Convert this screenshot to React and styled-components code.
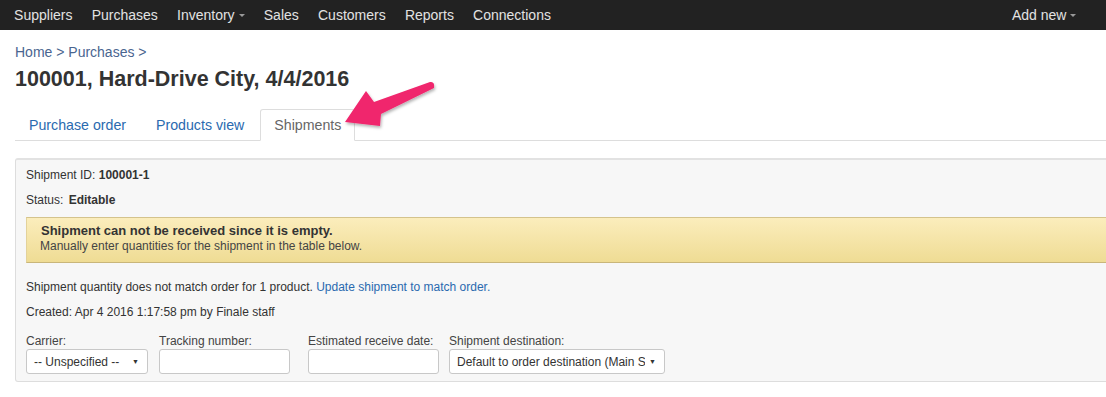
import React from "react";
import styled, { createGlobalStyle } from "styled-components";

const Global = createGlobalStyle`
  html, body { margin: 0; padding: 0; background: #fff; overflow: hidden; }
  body { font-family: "Liberation Sans", Arial, sans-serif; color: #333; }
  * { box-sizing: border-box; }
`;

const NavBar = styled.div`
  height: 30px;
  background: #222;
  display: flex;
  align-items: center;
  justify-content: space-between;
  padding: 0 20px 0 4.5px;
`;

const NavGroup = styled.div`
  display: flex;
  align-items: center;
`;

const NavItem = styled.span`
  color: #e2e2e2;
  font-size: 14px;
  padding: 0 9.6px;
  display: inline-flex;
  align-items: center;
`;

const Caret = styled.span`
  display: inline-block;
  margin-left: 4px;
  width: 0;
  height: 0;
  border-left: 3px solid transparent;
  border-right: 3px solid transparent;
  border-top: 3px solid #999;
`;

const Page = styled.div`
  position: relative;
  padding: 14px 0 0 15px;
`;

const Breadcrumb = styled.div`
  font-size: 14px;
  color: #4a6590;
  line-height: 16px;
`;

const Title = styled.h1`
  margin: 7px 0 0;
  font-size: 21.5px;
  font-weight: bold;
  color: #333;
  line-height: 24px;
`;

const Tabs = styled.div`
  display: flex;
  margin-top: 18px;
  border-bottom: 1px solid #ddd;
  height: 32px;
`;

const Tab = styled.div`
  padding: 0 13px;
  margin-right: 2px;
  font-size: 14.2px;
  height: ${(p) => (p.$active ? "32px" : "31px")};
  display: flex;
  align-items: center;
  color: ${(p) => (p.$active ? "#666" : "#2a6aaf")};
  background: #fff;
  border: 1px solid ${(p) => (p.$active ? "#ddd" : "transparent")};
  border-bottom-color: transparent;
  border-radius: 3px 3px 0 0;
`;

const Panel = styled.div`
  margin-top: 17px;
  margin-right: -20px;
  background: #f7f7f7;
  border: 1px solid #ddd;
  border-top: 2px solid #e2e2e2;
  border-radius: 3px;
  padding: 7px 0 7px 10px;
  font-size: 12px;
  color: #333;
`;

const Line = styled.div`
  line-height: 16px;
  margin-bottom: ${(p) => p.$mb ?? 9}px;
`;

const Strong = styled.b`
  font-weight: bold;
  margin-left: ${(p) => p.$ml || 0}px;
`;

const Alert = styled.div`
  background: linear-gradient(#fbedbc, #efdc94);
  border-top: 1px solid #d4c38c;
  border-bottom: 1px solid #c9b67a;
  border-left: 1px solid #e3d29a;
  padding: 5px 0 9px 14px;
  margin-bottom: 16px;
`;

const AlertTitle = styled.div`
  font-size: 13px;
  font-weight: bold;
  color: #333;
  line-height: 16px;
`;

const AlertText = styled.div`
  font-size: 12px;
  color: #444;
  line-height: 14px;
  margin-left: -1px;
`;

const Link = styled.span`
  color: #2a6aaf;
`;

const FieldRow = styled.div`
  display: flex;
  align-items: flex-end;
  margin-top: 14px;
`;

const Field = styled.div`
  display: flex;
  flex-direction: column;
  margin-right: ${(p) => p.$mr}px;
`;

const Label = styled.label`
  font-size: 12px;
  color: #444;
  line-height: 14px;
  margin-bottom: 1px;
`;

const Input = styled.div`
  width: ${(p) => p.$w}px;
  height: 25px;
  background: #fff;
  border: 1px solid #c8c8c8;
  border-radius: 3px;
`;

const Select = styled.div`
  width: ${(p) => p.$w}px;
  height: 25px;
  background: #fff;
  border: 1px solid #c8c8c8;
  border-radius: 3px;
  display: flex;
  align-items: center;
  padding: 0 8px 0 7px;
  font-size: 12px;
  color: #333;
  white-space: nowrap;
`;

const SelText = styled.span`
  flex: 1;
  min-width: 0;
  overflow: hidden;
  white-space: nowrap;
`;

const SelCaret = styled.span`
  flex: none;
  font-size: 7px;
  color: #333;
  margin-left: 4px;
`;

const Arrow = styled.svg`
  position: absolute;
  left: 330px;
  top: 47px;
  overflow: visible;
`;

export default function App() {
  return (
    <>
      <Global />
      <NavBar>
        <NavGroup>
          <NavItem>Suppliers</NavItem>
          <NavItem>Purchases</NavItem>
          <NavItem>
            Inventory<Caret />
          </NavItem>
          <NavItem>Sales</NavItem>
          <NavItem>Customers</NavItem>
          <NavItem>Reports</NavItem>
          <NavItem>Connections</NavItem>
        </NavGroup>
        <NavGroup>
          <NavItem>
            Add new<Caret />
          </NavItem>
        </NavGroup>
      </NavBar>
      <Page>
        <Breadcrumb>Home &gt; Purchases &gt;</Breadcrumb>
        <Title>100001, Hard-Drive City, 4/4/2016</Title>
        <Tabs>
          <Tab>Purchase order</Tab>
          <Tab>Products view</Tab>
          <Tab $active>Shipments</Tab>
        </Tabs>
        <Panel>
          <Line>
            Shipment ID: <Strong>100001-1</Strong>
          </Line>
          <Line $mb={9}>
            Status: <Strong $ml={2}>Editable</Strong>
          </Line>
          <Alert>
            <AlertTitle>Shipment can not be received since it is empty.</AlertTitle>
            <AlertText>Manually enter quantities for the shipment in the table below.</AlertText>
          </Alert>
          <Line>
            Shipment quantity does not match order for 1 product.{" "}
            <Link>Update shipment to match order.</Link>
          </Line>
          <Line $mb={0}>Created: Apr 4 2016 1:17:58 pm by Finale staff</Line>
          <FieldRow>
            <Field $mr={11}>
              <Label>Carrier:</Label>
              <Select $w={122}>
                <SelText>-- Unspecified --</SelText>
                <SelCaret>▼</SelCaret>
              </Select>
            </Field>
            <Field $mr={18}>
              <Label>Tracking number:</Label>
              <Input $w={131} />
            </Field>
            <Field $mr={10}>
              <Label>Estimated receive date:</Label>
              <Input $w={131} />
            </Field>
            <Field $mr={0}>
              <Label>Shipment destination:</Label>
              <Select $w={216}>
                <SelText>Default to order destination (Main Stockroom)</SelText>
                <SelCaret>▼</SelCaret>
              </Select>
            </Field>
          </FieldRow>
        </Panel>
        <Arrow width="110" height="55" viewBox="0 0 110 55">
          <defs>
            <filter id="sh" x="-20%" y="-20%" width="140%" height="150%">
              <feDropShadow dx="1" dy="2" stdDeviation="1.5" floodColor="#000" floodOpacity="0.3" />
            </filter>
          </defs>
          <path
            d="M15 45 L36 14 L44 25 L100 5 Q105 4 104 11 L51 37 L50 49 Z"
            fill="#f0266d"
            filter="url(#sh)"
          />
        </Arrow>
      </Page>
    </>
  );
}
